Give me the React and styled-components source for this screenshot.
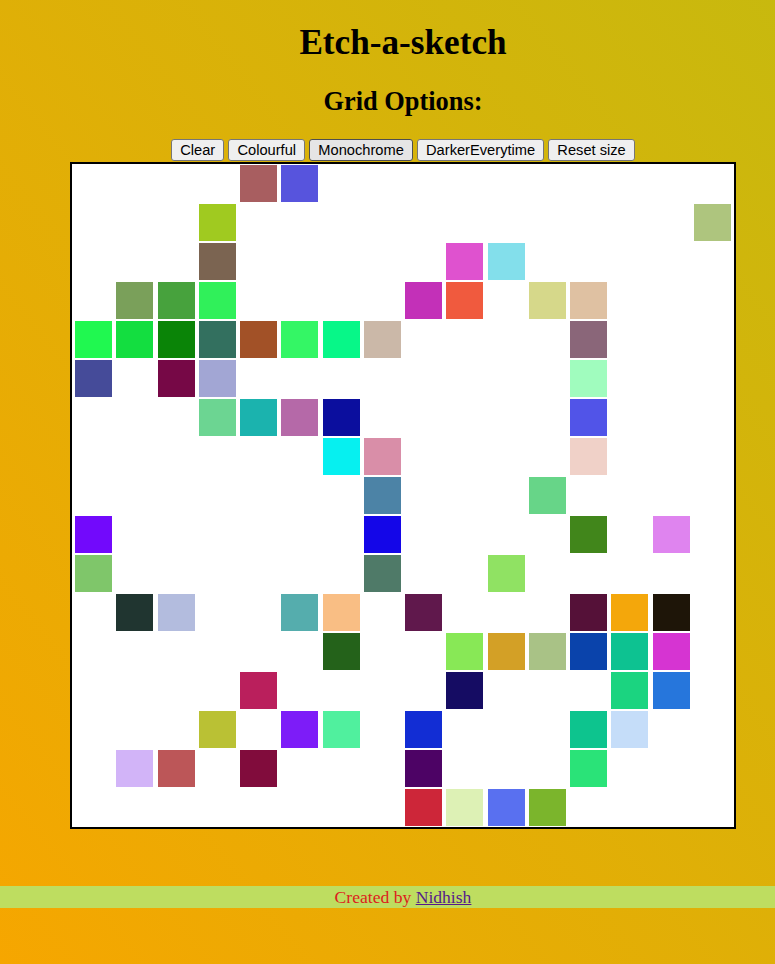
import styled, { createGlobalStyle } from "styled-components";

const GlobalStyle = createGlobalStyle`
  html, body {
    margin: 0;
    padding: 0;
    min-height: 100%;
  }
  body {
    min-height: 100vh;
    background: linear-gradient(to top right, #f6a600, #c8b90e);
    font-family: "Liberation Serif", "Times New Roman", serif;
  }
`;

const ROWS = 17;
const COLS = 16;

// painted squares: [row, col, colour]
const painted = [
  [0, 4, "#a85e60"], [0, 5, "#5754dd"],
  [1, 3, "#a0ca20"], [1, 15, "#aec57e"],
  [2, 3, "#7b6451"], [2, 9, "#df52cf"], [2, 10, "#83dfeb"],
  [3, 1, "#7aa05a"], [3, 2, "#47a23d"], [3, 3, "#30f05a"], [3, 8, "#c330b8"],
  [3, 9, "#f05a3e"], [3, 11, "#d6d88a"], [3, 12, "#dfc1a2"],
  [4, 0, "#20f850"], [4, 1, "#13de40"], [4, 2, "#0a8407"], [4, 3, "#33705f"],
  [4, 4, "#a25127"], [4, 5, "#34f665"], [4, 6, "#07f788"], [4, 7, "#cbb8a8"],
  [4, 12, "#8a6679"],
  [5, 0, "#454b99"], [5, 2, "#760846"], [5, 3, "#a2a6d4"], [5, 12, "#a0fcbe"],
  [6, 3, "#6cd592"], [6, 4, "#1bb3ae"], [6, 5, "#b569a8"], [6, 6, "#0b0e9e"],
  [6, 12, "#5154e8"],
  [7, 6, "#06f0f0"], [7, 7, "#d98ea8"], [7, 12, "#f0d1c8"],
  [8, 7, "#4c83a6"], [8, 11, "#67d588"],
  [9, 0, "#7209fc"], [9, 7, "#1406e8"], [9, 12, "#41861b"], [9, 14, "#df84ef"],
  [10, 0, "#7fc66a"], [10, 7, "#4f7a68"], [10, 10, "#90e263"],
  [11, 1, "#203530"], [11, 2, "#b3bcde"], [11, 5, "#55adad"], [11, 6, "#f9be84"],
  [11, 8, "#60184c"], [11, 12, "#551138"], [11, 13, "#f4a70b"], [11, 14, "#1e1508"],
  [12, 6, "#24621a"], [12, 9, "#88e856"], [12, 10, "#d3a026"], [12, 11, "#a9c286"],
  [12, 12, "#0a43ab"], [12, 13, "#0dc291"], [12, 14, "#d634d2"],
  [13, 4, "#ba1f5c"], [13, 9, "#150c63"], [13, 13, "#1bd480"], [13, 14, "#2676dc"],
  [14, 3, "#bac134"], [14, 5, "#7d1cf8"], [14, 6, "#50f09e"], [14, 8, "#122dd4"],
  [14, 12, "#0dc48e"], [14, 13, "#c5ddf9"],
  [15, 1, "#d2b4f8"], [15, 2, "#bc5658"], [15, 4, "#810c3c"], [15, 8, "#4d0365"],
  [15, 12, "#2ae378"],
  [16, 8, "#cd2639"], [16, 9, "#ddf1b5"], [16, 10, "#5970f0"], [16, 11, "#7bb52c"],
];

const colourAt = {};
painted.forEach(([r, c, col]) => {
  colourAt[`${r}-${c}`] = col;
});

const Page = styled.div`
  display: flex;
  flex-direction: column;
  align-items: center;
  padding-left: 31px;
`;

const Title = styled.h1`
  margin: 23px 0 0;
  font-size: 35.2px;
  line-height: 40px;
  font-weight: bold;
  color: #000;
`;

const Subtitle = styled.h2`
  margin: 23px 0 0;
  font-size: 26.4px;
  line-height: 30px;
  font-weight: bold;
  color: #000;
`;

const Toolbar = styled.div`
  display: flex;
  gap: 4px;
  margin-top: 23px;
`;

const Button = styled.button`
  height: 22px;
  padding: 0 8.1px;
  font-family: "Liberation Sans", Arial, sans-serif;
  font-size: 14.67px;
  color: #000;
  background: ${(p) => (p.$active ? "#e5e5e5" : "#efefef")};
  border: 1px solid ${(p) => (p.$active ? "#4f4f4f" : "#767676")};
  border-radius: 3px;
  cursor: pointer;
`;

const Board = styled.div`
  box-sizing: border-box;
  width: 666px;
  height: 667px;
  margin-top: 1px;
  padding: 1px 0 0 3px;
  border: 2px solid #000;
  background: #fff;
  display: grid;
  grid-template-columns: repeat(${COLS}, 37px);
  grid-template-rows: repeat(${ROWS}, 37px);
  column-gap: 4.27px;
  row-gap: 2px;
`;

const Cell = styled.div`
  width: 37px;
  height: 37px;
  background: ${(p) => p.$colour || "#fff"};
`;

const Footer = styled.footer`
  margin-top: 57px;
  height: 22px;
  background: #bedd60;
  display: flex;
  justify-content: center;
  align-items: center;
  padding-left: 31px;
  font-size: 17.6px;
  line-height: 22px;
  color: #dd1c1c;
`;

const Credit = styled.a`
  color: #551a8b;
  text-decoration: underline;
  margin-left: 4.4px;
`;

const buttons = ["Clear", "Colourful", "Monochrome", "DarkerEverytime", "Reset size"];

const App = () => {
  const cells = [];
  for (let r = 0; r < ROWS; r++) {
    for (let c = 0; c < COLS; c++) {
      cells.push(<Cell key={`${r}-${c}`} $colour={colourAt[`${r}-${c}`]} />);
    }
  }

  return (
    <>
      <GlobalStyle />
      <Page>
        <Title>Etch-a-sketch</Title>
        <Subtitle>Grid Options:</Subtitle>
        <Toolbar>
          {buttons.map((b) => (
            <Button key={b} $active={b === "Monochrome"}>
              {b}
            </Button>
          ))}
        </Toolbar>
        <Board>{cells}</Board>
      </Page>
      <Footer>
        Created by<Credit href="#">Nidhish</Credit>
      </Footer>
    </>
  );
};

export default App;
